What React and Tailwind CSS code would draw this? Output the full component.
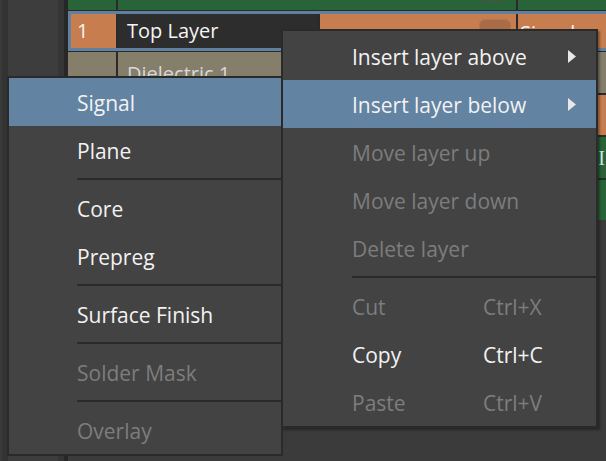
import React from 'react';

const rightItems = [
  { label: 'Insert layer above', arrow: true },
  { label: 'Insert layer below', arrow: true, active: true },
  { label: 'Move layer up', disabled: true },
  { label: 'Move layer down', disabled: true },
  { label: 'Delete layer', disabled: true },
  { sep: true },
  { label: 'Cut', shortcut: 'Ctrl+X', disabled: true },
  { label: 'Copy', shortcut: 'Ctrl+C' },
  { label: 'Paste', shortcut: 'Ctrl+V', disabled: true },
];

const subItems = [
  { label: 'Signal', active: true },
  { label: 'Plane' },
  { sep: true },
  { label: 'Core' },
  { label: 'Prepreg' },
  { sep: true },
  { label: 'Surface Finish' },
  { sep: true },
  { label: 'Solder Mask', disabled: true },
  { sep: true },
  { label: 'Overlay', disabled: true },
];

const Arrow = () => (
  <svg width="8" height="13" viewBox="0 0 8 13" className="ml-auto mr-[20px] -mt-[4px]">
    <polygon points="0,0 8,6.5 0,13" fill="#e8e8e8" />
  </svg>
);

const MenuRow = ({ item, indent }) => {
  if (item.sep) {
    return (
      <div className={`h-[10px] flex items-center ${indent}`}>
        <div className="h-[2px] flex-1 bg-[#2a2a2a]"></div>
      </div>
    );
  }
  return (
    <div
      className={`h-[48px] pt-[4px] flex items-center ${indent} ${item.active ? 'bg-[#6283a2]' : ''} ${
        item.disabled ? 'text-[#7d7d7d]' : 'text-[#f2f2f2]'
      }`}
    >
      <span className="w-[131px] whitespace-nowrap">{item.label}</span>
      {item.shortcut && <span>{item.shortcut}</span>}
      {item.arrow && <Arrow />}
    </div>
  );
};

const App = () => {
  return (
    <div className="relative w-[606px] h-[461px] overflow-hidden flex bg-[#3b3b3b] font-['Open_Sans','Noto_Sans',sans-serif] text-[20px]">
      {/* left strip */}
      <div className="flex h-full shrink-0">
        <div className="w-[2px] bg-[#3a3a3a]"></div>
        <div className="w-[6px] bg-[#333333]"></div>
        <div className="w-[50px] bg-[#3d3d3d]"></div>
        <div className="w-[6px] bg-[#363636]"></div>
        <div className="w-[4px] bg-[#272727]"></div>
      </div>

      {/* layer table */}
      <div className="flex-1 min-w-0 flex flex-col">
        <div className="h-[10px] flex bg-[#2a2a2a] gap-[2px]">
          <div className="w-[48px] bg-[#296338]"></div>
          <div className="w-[398px] bg-[#296338] relative">
            <div className="absolute left-[362px] top-0 w-[23px] h-[2px] rounded-b bg-[#3b5a3f]"></div>
          </div>
          <div className="flex-1 bg-[#296338]"></div>
        </div>
        <div className="h-px bg-[#2a2a2a]"></div>

        <div className="h-[40px] border-[3px] border-r-0 border-[#5f80a0] flex bg-[#2a2a2a] gap-[2px] text-[#f4f4f4]">
          <div className="w-[45px] bg-[#c77d4e] flex items-center pl-[6px]">1</div>
          <div className="w-[200px] bg-[#2d2d2d] flex items-center pl-[9px] whitespace-nowrap">Top Layer</div>
          <div className="w-[196px] bg-[#c77d4e] relative">
            <div className="absolute left-[159px] top-[5px] w-[32px] h-[20px] rounded-[6px] bg-[#a96c49] border border-[#b67650]"></div>
          </div>
          <div className="flex-1 bg-[#c77d4e] flex items-center pt-[4px] pl-[2px] whitespace-nowrap">Signal</div>
        </div>
        <div className="h-px bg-[#2a2a2a]"></div>

        <div className="h-[41px] flex bg-[#2a2a2a] gap-[2px] text-[#d8d8d8]">
          <div className="w-[48px] bg-[#857e6b]"></div>
          <div className="flex-1 bg-[#857e6b] flex items-center pt-[2px] pl-[9px] whitespace-nowrap">Dielectric 1</div>
        </div>
        <div className="h-[2px] bg-[#2a2a2a]"></div>
        <div className="h-[40px] bg-[#c77d4e]"></div>
        <div className="h-[2px] bg-[#2a2a2a]"></div>
        <div className="h-[41px] bg-[#296338] flex justify-end items-center pr-[1px] text-[#cfe6e6] font-['Liberation_Serif',serif]">I</div>
        <div className="h-[2px] bg-[#2a2a2a]"></div>
        <div className="h-[40px] bg-[#296338]"></div>
        <div className="flex-1 bg-[#3b3b3b]"></div>
      </div>

      {/* context menu */}
      <div className="absolute left-[281px] top-[29px] w-[317px] border-2 border-[#2a2a2a] bg-[#434343] pt-px text-[21px] shadow-[2px_2px_2px_rgba(0,0,0,0.35)]">
        {rightItems.map((item, i) => (
          <MenuRow key={i} item={item} indent="pl-[69px]" />
        ))}
      </div>

      {/* insert layer submenu */}
      <div className="absolute left-[7px] top-[76px] w-[276px] border-2 border-[#2a2a2a] bg-[#434343] text-[21px]">
        {subItems.map((item, i) => (
          <MenuRow key={i} item={item} indent="pl-[68px]" />
        ))}
      </div>
    </div>
  );
};

export default App;
